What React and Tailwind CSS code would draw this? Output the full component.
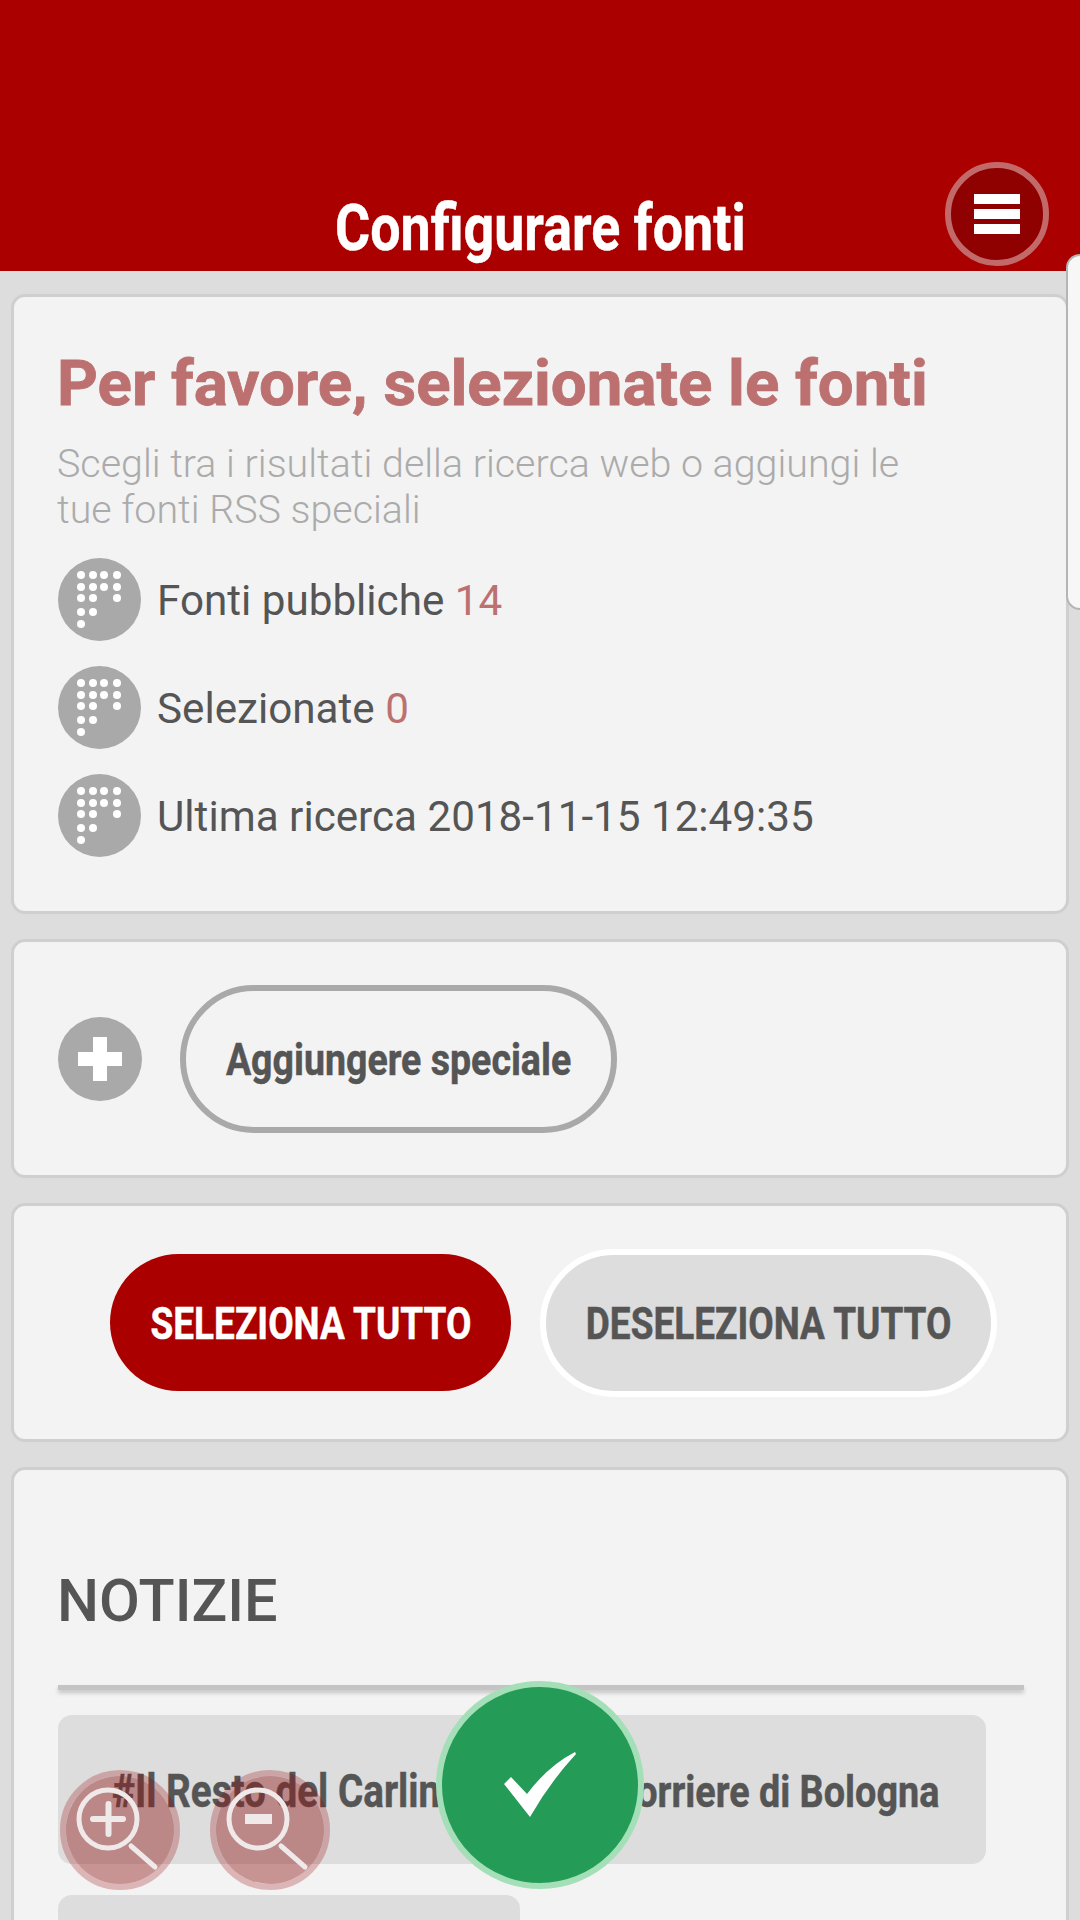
const Dots = () => {
    const dots = [
        [23, 17], [35, 17], [46, 17], [59, 17],
        [23, 29], [35, 29], [46, 29], [59, 29],
        [23, 40], [35, 40], [59, 40],
        [23, 54], [35, 54],
        [23, 66],
    ];
    return (
        <svg viewBox="0 0 83 83" className="w-[83px] h-[83px] shrink-0">
            <circle cx="41.5" cy="41.5" r="41.5" fill="#a9a9a9" />
            {dots.map(([x, y]) => <circle key={`${x}-${y}`} cx={x} cy={y} r="4" fill="#fff" />)}
        </svg>
    );
};

const StatRow = ({ label, value }) => (
    <div className="flex items-center gap-4 h-[83px]">
        <Dots />
        <span className="text-[42.2px] text-[#555] translate-y-px">
            {label} <span className="text-[#bc7070]">{value}</span>
        </span>
    </div>
);

const Card = ({ className, children }) => (
    <section className={`mx-[11px] rounded-[14px] bg-[#f3f3f3] border-[3px] border-[#cfcfcf] ${className}`}>
        {children}
    </section>
);

const Narrow = ({ className, children }) => (
    <span className={`inline-block whitespace-nowrap font-bold scale-x-[0.84] [-webkit-text-stroke:0.5px] ${className}`}>{children}</span>
);

const ZoomIcon = ({ minus }) => (
    <svg viewBox="0 0 120 120" className="w-[120px] h-[120px]">
        <circle cx="60" cy="60" r="57" fill="none" stroke="#960000" strokeOpacity="0.25" strokeWidth="6" />
        <circle cx="60" cy="60" r="54" fill="#8f1a1a" fillOpacity="0.44" />
        <circle cx="48" cy="49" r="29" fill="none" stroke="#efe9e9" strokeWidth="5" />
        <path d="M71 76 L95 97" stroke="#efe9e9" strokeWidth="5" strokeLinecap="round" />
        {minus ? (
            <rect x="35" y="44" width="27" height="10" fill="#efe9e9" />
        ) : (
            <path d="M33 49 H63 M48.5 34 V64" stroke="#efe9e9" strokeWidth="6" strokeLinecap="round" />
        )}
    </svg>
);

export default function App() {
    return (
        <div className="relative w-[1080px] h-[1920px] overflow-hidden bg-[#dddddd] font-['Roboto',sans-serif]">
            <header className="relative h-[271px] bg-[#ab0000] flex items-end justify-center">
                <Narrow className="text-[64px] leading-[70px] mb-[7px] text-white">Configurare fonti</Narrow>
                <button className="absolute left-[945px] top-[162px] w-[104px] h-[104px] rounded-full bg-[#8f0000] border-[6px] border-[#c26a6a] flex flex-col items-center justify-center gap-[5px]">
                    <i className="block w-[46px] h-[10px] bg-white" />
                    <i className="block w-[46px] h-[10px] bg-white" />
                    <i className="block w-[46px] h-[10px] bg-white" />
                </button>
            </header>

            <main className="flex flex-col gap-[25px] pt-[23px]">
                <Card className="h-[620px] pl-[44px] pt-[52px]">
                    <h1 className="-ml-px text-[63.6px] leading-[70px] font-bold [-webkit-text-stroke:0.8px] text-[#bc7070] whitespace-nowrap">Per favore, selezionate le fonti</h1>
                    <p className="-ml-px mt-[22px] w-[900px] text-[39.4px] leading-[46px] font-light text-[#ababab]">
                        Scegli tra i risultati della ricerca web o aggiungi le tue fonti RSS speciali
                    </p>
                    <div className="mt-[25px] flex flex-col gap-[25px]">
                        <StatRow label="Fonti pubbliche" value="14" />
                        <StatRow label="Selezionate" value="0" />
                        <StatRow label="Ultima ricerca 2018-11-15 12:49:35" value="" />
                    </div>
                </Card>

                <Card className="h-[239px] pl-[44px] flex items-center gap-[38px]">
                    <div className="w-[84px] h-[84px] rounded-full bg-[#a9a9a9] flex items-center justify-center">
                        <svg viewBox="0 0 50 50" className="w-[50px] h-[50px]">
                            <path d="M18 3 H32 V18 H47 V32 H32 V47 H18 V32 H3 V18 H18 Z" fill="#fff" />
                        </svg>
                    </div>
                    <button className="w-[437px] h-[148px] rounded-full border-[6px] border-[#a9a9a9] flex items-center justify-center">
                        <Narrow className="text-[44.7px] text-[#555] translate-y-[2px]">Aggiungere speciale</Narrow>
                    </button>
                </Card>

                <Card className="h-[239px] pl-[96px] flex items-center gap-[29px]">
                    <button className="w-[401px] h-[137px] rounded-full bg-[#ab0000] flex items-center justify-center">
                        <Narrow className="text-[44px] text-white translate-y-px">SELEZIONA TUTTO</Narrow>
                    </button>
                    <button className="w-[457px] h-[148px] rounded-full bg-[#dddddd] border-[6px] border-white flex items-center justify-center">
                        <Narrow className="text-[44px] text-[#555] translate-y-px">DESELEZIONA TUTTO</Narrow>
                    </button>
                </Card>

                <Card className="h-[600px] pl-[44px]">
                    <h2 className="-ml-px mt-[97px] text-[59.3px] leading-[68px] font-medium text-[#555]">NOTIZIE</h2>
                    <div className="mt-[50px] w-[966px] h-[5px] bg-[#c4c4c4] shadow-[0_3px_4px_rgba(0,0,0,0.2)]" />
                    <div className="mt-[25px] w-[928px] h-[149px] rounded-[14px] bg-[#dddddd] flex items-center justify-between pl-[54px] pr-[47px]">
                        <Narrow className="text-[46px] text-[#555] origin-left translate-y-[2px]">#Il Resto del Carlino</Narrow>
                        <Narrow className="text-[45px] text-[#555] origin-right translate-y-[2px]">Corriere di Bologna</Narrow>
                    </div>
                    <div className="mt-[31px] w-[462px] h-[149px] rounded-[14px] bg-[#dddddd]" />
                </Card>
            </main>

            <div className="absolute left-[1066px] top-[254px] w-[20px] h-[356px] rounded-l-[14px] bg-[#f7f7f7] border-l-2 border-y-2 border-[#b5b5b5]" />

            <div className="absolute left-[60px] top-[1770px]"><ZoomIcon /></div>
            <div className="absolute left-[210px] top-[1770px]"><ZoomIcon minus /></div>

            <button className="absolute left-[436px] top-[1681px] w-[208px] h-[208px] rounded-full bg-[#259b58] border-[6px] border-[#a5dfb8] flex items-center justify-center">
                <svg viewBox="0 0 72 66" className="w-[72px] h-[66px]">
                    <path d="M0 32 L7 25 L23 42 Q44 14 71 0 L72 2 Q46 30 26 65 Z" fill="#fff" />
                </svg>
            </button>
        </div>
    );
}
